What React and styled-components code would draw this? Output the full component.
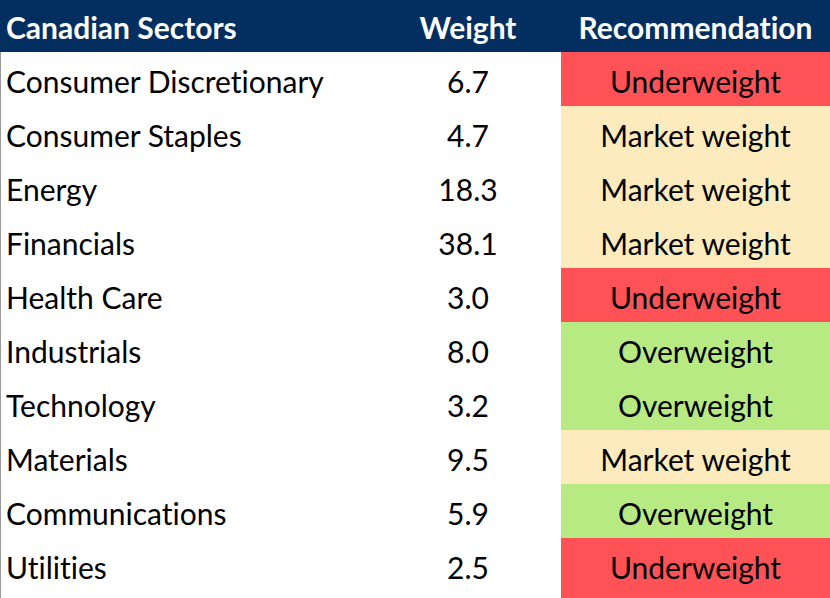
import React from 'react'
import styled, { createGlobalStyle } from 'styled-components'

const GlobalStyle = createGlobalStyle`
  html, body {
    margin: 0;
    padding: 0;
    background: #ffffff;
    overflow: hidden;
  }
  body {
    font-family: Lato, "Open Sans", sans-serif;
    font-variant-ligatures: none;
    font-feature-settings: "liga" 0, "clig" 0;
  }
`

const Table = styled.div`
  width: 830px;
  height: 598px;
  overflow: hidden;
  display: grid;
  grid-template-columns: 375px 186px 269px;
  grid-template-rows: 52px repeat(9, 54px) 1fr;
`

const HeadCell = styled.div`
  background: #022f60;
  color: #ffffff;
  font-weight: 700;
  font-size: 30px;
  display: flex;
  align-items: center;
  justify-content: ${p => (p.$left ? 'flex-start' : 'center')};
  padding-left: ${p => (p.$left ? '6px' : '0')};
  padding-top: 2px;
`

const recColors = {
  Underweight: '#ff5257',
  'Market weight': '#feebbd',
  Overweight: '#b8ea84',
}

const Cell = styled.div`
  font-size: 30px;
  color: #000000;
  display: flex;
  align-items: flex-start;
  justify-content: center;
  padding-top: 11px;
`

const SectorCell = styled(Cell)`
  justify-content: flex-start;
  padding-left: 5px;
  border-left: 1px solid #9a9a9a;
`

const RecCell = styled(Cell)`
  background: ${p => recColors[p.$rec]};
`

const rows = [
  ['Consumer Discretionary', '6.7', 'Underweight'],
  ['Consumer Staples', '4.7', 'Market weight'],
  ['Energy', '18.3', 'Market weight'],
  ['Financials', '38.1', 'Market weight'],
  ['Health Care', '3.0', 'Underweight'],
  ['Industrials', '8.0', 'Overweight'],
  ['Technology', '3.2', 'Overweight'],
  ['Materials', '9.5', 'Market weight'],
  ['Communications', '5.9', 'Overweight'],
  ['Utilities', '2.5', 'Underweight'],
]

const App = () => (
  <>
    <GlobalStyle />
    <Table>
      <HeadCell $left>Canadian Sectors</HeadCell>
      <HeadCell>Weight</HeadCell>
      <HeadCell>Recommendation</HeadCell>
      {rows.map(([sector, weight, rec]) => (
        <React.Fragment key={sector}>
          <SectorCell>{sector}</SectorCell>
          <Cell>{weight}</Cell>
          <RecCell $rec={rec}>{rec}</RecCell>
        </React.Fragment>
      ))}
    </Table>
  </>
)

export default App
